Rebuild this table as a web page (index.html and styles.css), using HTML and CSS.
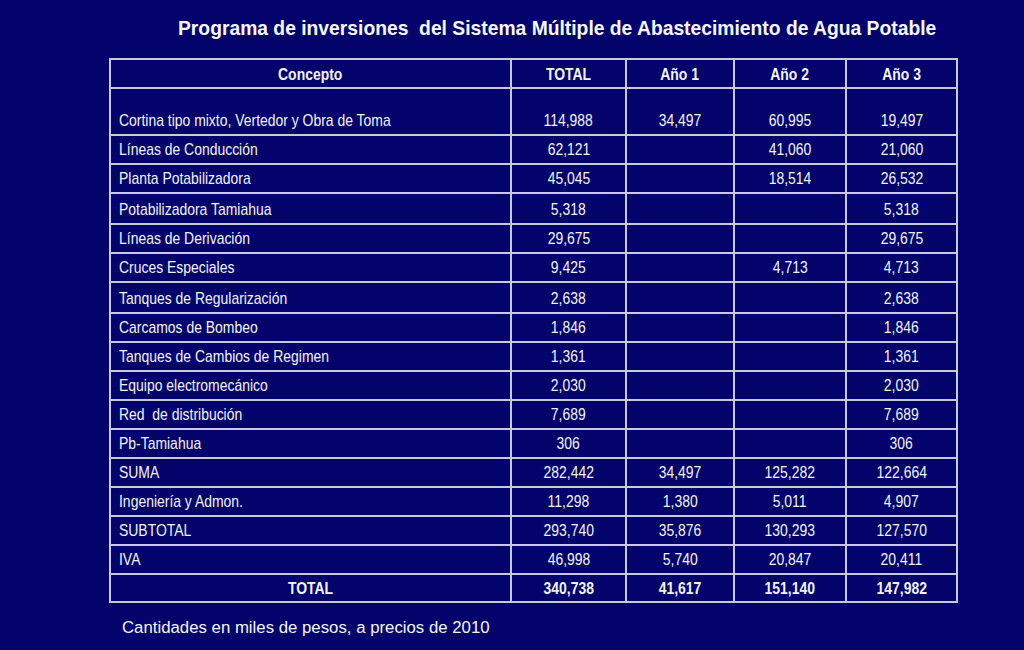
FILE: index.html
```html
<!DOCTYPE html>
<html lang="es">
<head>
<meta charset="utf-8">
<title>Programa de inversiones</title>
<link rel="stylesheet" href="styles.css">
</head>
<body>
<div class="slide">
  <h1 class="title">Programa de inversiones&nbsp; del Sistema Múltiple de Abastecimiento de Agua Potable</h1>
  <table class="grid">
    <colgroup>
      <col class="c-concepto"><col class="c-total"><col class="c-a1"><col class="c-a2"><col class="c-a3">
    </colgroup>
    <thead>
      <tr class="r-head"><th><span class="t">Concepto</span></th><th><span class="t">TOTAL</span></th><th><span class="t">Año 1</span></th><th><span class="t">Año 2</span></th><th><span class="t">Año 3</span></th></tr>
    </thead>
    <tbody>
      <tr class="r-tall"><td class="lbl"><span class="t">Cortina tipo mixto, Vertedor y Obra de Toma</span></td><td><span class="t">114,988</span></td><td><span class="t">34,497</span></td><td><span class="t">60,995</span></td><td><span class="t">19,497</span></td></tr>
      <tr><td class="lbl"><span class="t">Líneas de Conducción</span></td><td><span class="t">62,121</span></td><td></td><td><span class="t">41,060</span></td><td><span class="t">21,060</span></td></tr>
      <tr><td class="lbl"><span class="t">Planta Potabilizadora</span></td><td><span class="t">45,045</span></td><td></td><td><span class="t">18,514</span></td><td><span class="t">26,532</span></td></tr>
      <tr class="r-wide"><td class="lbl"><span class="t">Potabilizadora Tamiahua</span></td><td><span class="t">5,318</span></td><td></td><td></td><td><span class="t">5,318</span></td></tr>
      <tr><td class="lbl"><span class="t">Líneas de Derivación</span></td><td><span class="t">29,675</span></td><td></td><td></td><td><span class="t">29,675</span></td></tr>
      <tr><td class="lbl"><span class="t">Cruces Especiales</span></td><td><span class="t">9,425</span></td><td></td><td><span class="t">4,713</span></td><td><span class="t">4,713</span></td></tr>
      <tr class="r-wide"><td class="lbl"><span class="t">Tanques de Regularización</span></td><td><span class="t">2,638</span></td><td></td><td></td><td><span class="t">2,638</span></td></tr>
      <tr><td class="lbl"><span class="t">Carcamos de Bombeo</span></td><td><span class="t">1,846</span></td><td></td><td></td><td><span class="t">1,846</span></td></tr>
      <tr><td class="lbl"><span class="t">Tanques de Cambios de Regimen</span></td><td><span class="t">1,361</span></td><td></td><td></td><td><span class="t">1,361</span></td></tr>
      <tr><td class="lbl"><span class="t">Equipo electromecánico</span></td><td><span class="t">2,030</span></td><td></td><td></td><td><span class="t">2,030</span></td></tr>
      <tr><td class="lbl"><span class="t">Red&nbsp; de distribución</span></td><td><span class="t">7,689</span></td><td></td><td></td><td><span class="t">7,689</span></td></tr>
      <tr><td class="lbl"><span class="t">Pb-Tamiahua</span></td><td><span class="t">306</span></td><td></td><td></td><td><span class="t">306</span></td></tr>
      <tr><td class="lbl"><span class="t">SUMA</span></td><td><span class="t">282,442</span></td><td><span class="t">34,497</span></td><td><span class="t">125,282</span></td><td><span class="t">122,664</span></td></tr>
      <tr><td class="lbl"><span class="t">Ingeniería y Admon.</span></td><td><span class="t">11,298</span></td><td><span class="t">1,380</span></td><td><span class="t">5,011</span></td><td><span class="t">4,907</span></td></tr>
      <tr><td class="lbl"><span class="t">SUBTOTAL</span></td><td><span class="t">293,740</span></td><td><span class="t">35,876</span></td><td><span class="t">130,293</span></td><td><span class="t">127,570</span></td></tr>
      <tr><td class="lbl"><span class="t">IVA</span></td><td><span class="t">46,998</span></td><td><span class="t">5,740</span></td><td><span class="t">20,847</span></td><td><span class="t">20,411</span></td></tr>
      <tr class="r-total"><td><span class="t">TOTAL</span></td><td><span class="t">340,738</span></td><td><span class="t">41,617</span></td><td><span class="t">151,140</span></td><td><span class="t">147,982</span></td></tr>
    </tbody>
  </table>
  <p class="note">Cantidades en miles de pesos, a precios de 2010</p>
</div>
</body>
</html>
```

FILE: styles.css
```css
html, body {
  margin: 0;
  padding: 0;
  background: #03036b;
}
.slide {
  width: 1024px;
  height: 650px;
  box-sizing: border-box;
  padding: 17px 0 0 109px;
  background: #03036b;
  color: #f4f4f8;
  overflow: hidden;
}
.title {
  margin: 0 0 0 69px;
  font-family: "Liberation Sans", Arial, sans-serif;
  font-weight: bold;
  font-size: 19.3px;
  line-height: 24px;
  height: 41px;
  white-space: nowrap;
  color: #f6f6fa;
}
.grid {
  border-collapse: collapse;
  table-layout: fixed;
  width: 847px;
  font-family: "Liberation Sans", Arial, sans-serif;
  font-size: 17px;
  color: #f2f2f6;
}
.c-concepto { width: 401px; }
.c-total { width: 115px; }
.c-a1 { width: 108px; }
.c-a2 { width: 112px; }
.c-a3 { width: 111px; }
.grid th, .grid td {
  border: 2px solid #c9c9dd;
  padding: 1px 0 0;
  text-align: center;
  vertical-align: middle;
  height: 26px;
  line-height: 18px;
  white-space: nowrap;
}
.grid .t {
  display: inline-block;
  transform: scaleX(0.82);
  transform-origin: center center;
}
.grid td.lbl .t {
  transform-origin: left center;
}
.grid th {
  font-weight: bold;
  padding-top: 3px;
  height: 24px;
}
.grid td.lbl {
  text-align: left;
  padding-left: 8px;
}
.r-tall td {
  height: 41px;
  padding-top: 0;
  vertical-align: bottom;
  padding-bottom: 4px;
}
.r-wide td { height: 27px; padding-top: 2px; }
.r-total td {
  font-weight: bold;
  height: 25px;
  padding-top: 1px;
}
.note {
  margin: 15px 0 0 13px;
  font-family: "Liberation Sans", Arial, sans-serif;
  font-size: 16.8px;
  line-height: 20px;
  color: #f4f4f8;
}
```
